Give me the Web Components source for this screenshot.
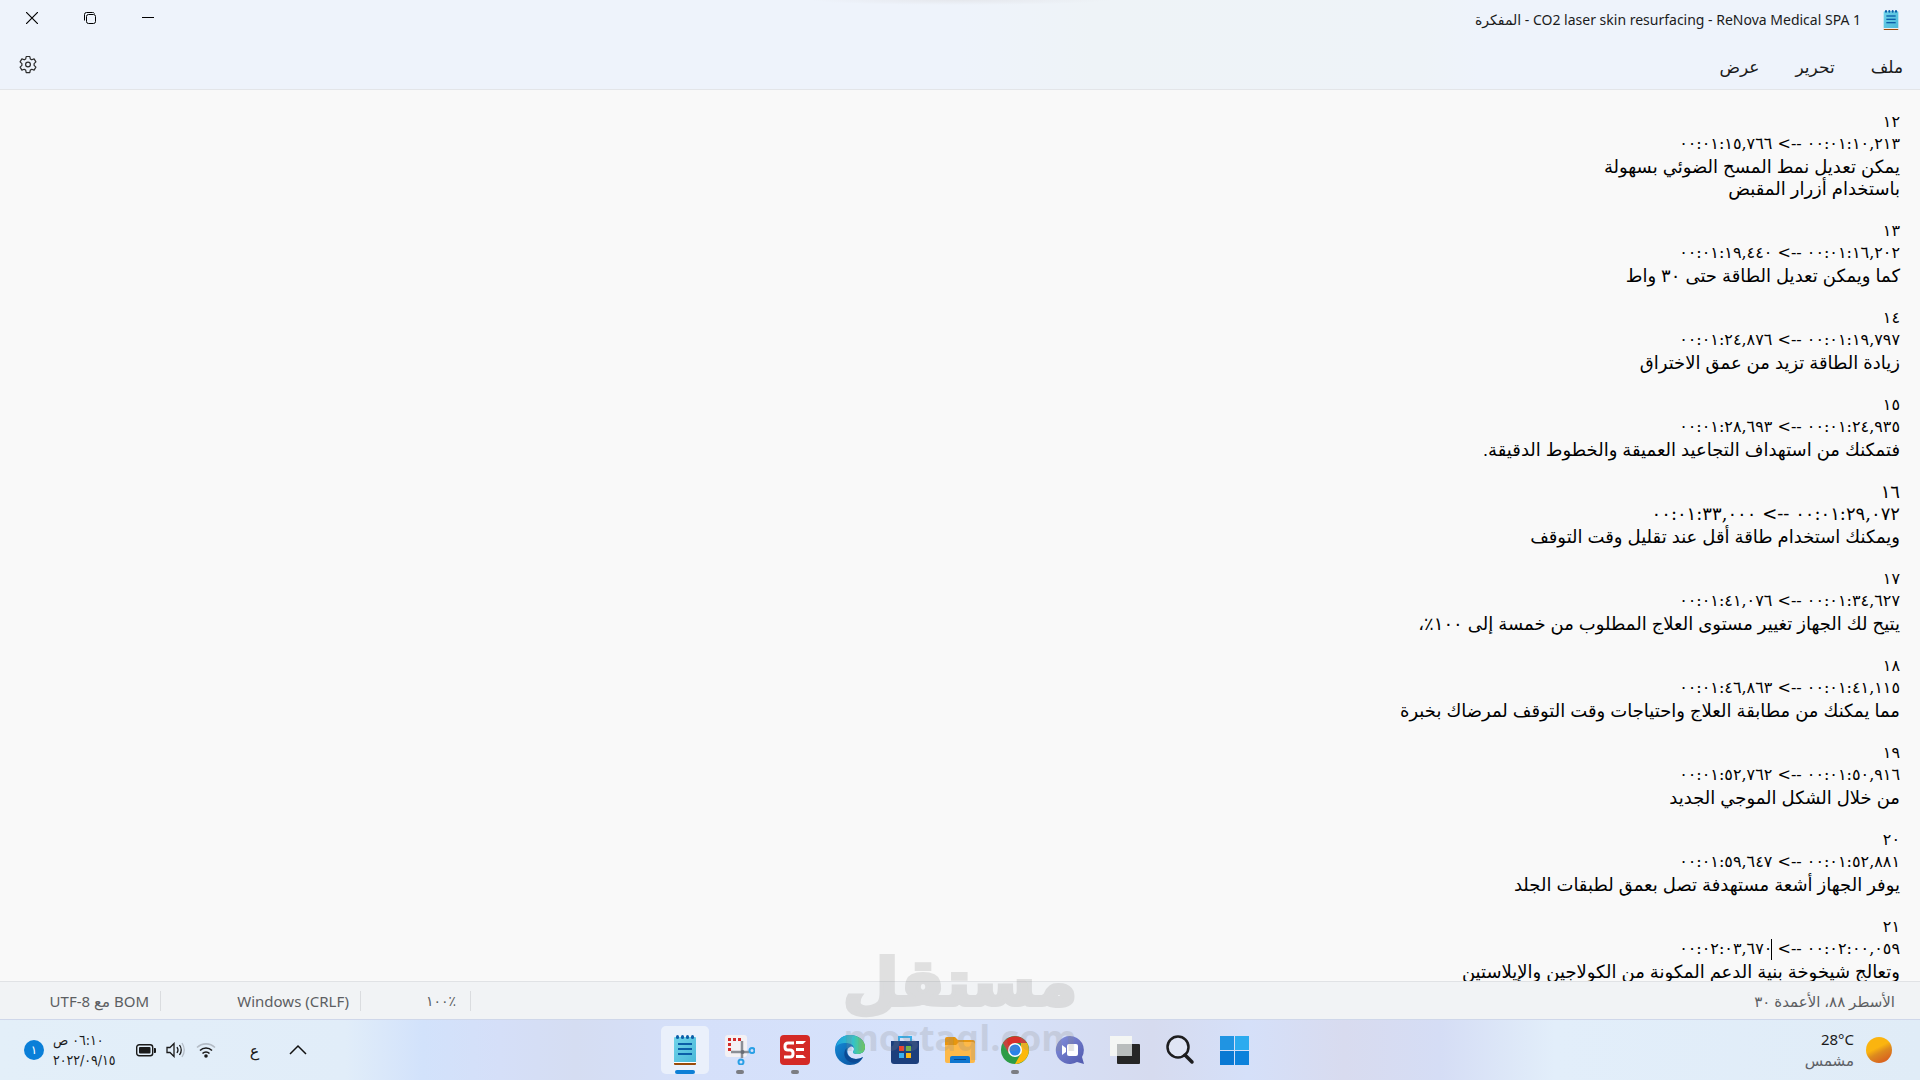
<!DOCTYPE html>
<html lang="ar" dir="rtl">
<head>
<meta charset="utf-8">
<title>CO2 laser skin resurfacing - ReNova Medical SPA 1 - المفكرة</title>
<style>
html,body{height:100%;margin:0}
body{overflow:hidden;font-family:"Noto Sans","DejaVu Sans",sans-serif;color:#1b1b1b;background:#f9f9f9}
</style>
</head>
<body>
<desk-top></desk-top>
<script>
const define = (name, html, setup) => {
  const tpl = document.createElement('template');
  tpl.innerHTML = html;
  customElements.define(name, class extends HTMLElement {
    constructor() {
      super();
      this.attachShadow({mode: 'open'}).append(tpl.content.cloneNode(true));
    }
    connectedCallback() { if (setup) setup(this, this.shadowRoot); }
  });
};
const reset = 'button{font:inherit;color:inherit;background:none;border:0;padding:0;margin:0}svg{display:block}';

/* ---- icons ---- */
const icons = {
  notepad: `<svg viewBox="0 0 30 30" width="30" height="30"><defs><linearGradient id="n" x1="0" y1="0" x2="1" y2="1"><stop offset="0" stop-color="#6fd3ea"/><stop offset="1" stop-color="#4ab8d8"/></linearGradient></defs><path d="M4 28h22v1q0 1-1 1H5q-1 0-1-1z" fill="#9a4a08"/><path d="M4 26h22v2H4z" fill="#fff"/><path d="M4 3q0-1 1-1h20q1 0 1 1v24H4z" fill="url(#n)"/><g fill="#0b5ea8"><rect x="6" y="0" width="3" height="4" rx="1.500"/><rect x="11" y="0" width="3" height="4" rx="1.500"/><rect x="16" y="0" width="3" height="4" rx="1.500"/><rect x="21" y="0" width="3" height="4" rx="1.500"/><rect x="8" y="8" width="14" height="2"/><rect x="8" y="13" width="14" height="2"/><rect x="8" y="18" width="14" height="2"/></g></svg>`,
  snip: `<svg viewBox="0 0 30 30" width="30" height="30"><rect width="22" height="22" rx="3" fill="#f3f1f4"/><g fill="#d32a27"><rect x="3" y="3" width="3" height="3"/><rect x="8" y="3" width="3" height="3"/><rect x="13" y="3" width="3" height="3"/><rect x="3" y="8" width="3" height="3"/><rect x="3" y="13" width="3" height="3"/></g><path d="M17 6v17M6 17h18" stroke="#8b8f96" stroke-width="2.500"/><g fill="none" stroke="#2aa0e6" stroke-width="2"><circle cx="27" cy="15.500" r="2.500"/><circle cx="16" cy="27" r="2.500"/></g><circle cx="17.500" cy="17" r="2" fill="#666b73"/></svg>`,
  se: `<svg viewBox="0 0 30 30" width="30" height="30"><rect width="30" height="30" rx="4" fill="#d42a26"/><path d="M14 8H8q-3 0-3 3v1q0 3 3 3h2q3 0 3 3v1q0 3-3 3H4" fill="none" stroke="#fff" stroke-width="3"/><path d="M16 6h10l-3 3h-7zM16 13h8v3h-8zM16 20h7l3 3H16z" fill="#fff"/></svg>`,
  edge: `<svg viewBox="0 0 30 30" width="30" height="30"><defs><linearGradient id="e" x1="0" y1="0" x2="1" y2="0"><stop offset="0" stop-color="#1fa3e0"/><stop offset=".6" stop-color="#35c1c8"/><stop offset="1" stop-color="#6ad457"/></linearGradient><linearGradient id="f" x1="0" y1="0" x2="1" y2="1"><stop offset="0" stop-color="#1590dc"/><stop offset="1" stop-color="#0a4a97"/></linearGradient></defs><path d="M0 15C0 6 7 0 15 0c9 0 15 6 15 12 0 5-4 7-7 7-4 0-5-1-5-2 0-1 1-1 1-3 0-2-2-3-4-2-5 2-3 12 6 12 3 0 5-1 7-2-2 5-7 8-13 8C7 30 0 23 0 15z" fill="url(#f)"/><path d="M1 12C3 4 8 0 15 0c9 0 15 6 15 12 0 5-4 7-7 7-4 0-5-1-5-2 0-1 1-1 1-3 0-4-4-6-8-6-5 0-8 1-10 4z" fill="url(#e)"/><path d="M12 13c-4 3-4 11 3 14 5 2 10-1 13-5-2 1-4 2-7 2-7 0-11-6-9-11z" fill="#0b4a94"/></svg>`,
  store: `<svg viewBox="0 0 30 30" width="30" height="30"><path d="M9 6V2h12v4" fill="none" stroke="#35aeea" stroke-width="2"/><path d="M1 6h28v20q0 3-3 3H4q-3 0-3-3z" fill="#1c3f7c"/><path d="M9 11h5v5H9z" fill="#e8452c"/><path d="M16 11h5v5h-5z" fill="#6fb93a"/><path d="M9 18h5v5H9z" fill="#3ab0ee"/><path d="M16 18h5v5h-5z" fill="#fdb813"/></svg>`,
  folder: `<svg viewBox="0 0 30 30" width="30" height="30"><path d="M0 4q0-2 2-2h8l3 3h15q2 0 2 2v8H0z" fill="#e8960f"/><path d="M0 10h11l3-3h14q2 0 2 2v17q0 2-2 2H2q-2 0-2-2z" fill="#fdb94a"/><path d="M5 28v-5q0-2 2-2h16q2 0 2 2v5z" fill="#0f76cf"/><path d="M9 24h12v1H9z" fill="#08488c"/></svg>`,
  chrome: `<svg viewBox="0 0 28 28" width="28" height="28"><circle cx="14" cy="14" r="14" fill="#2c9c46"/><path d="M26 7a14 14 0 0 1-12 21l6-10.500V7z" fill="#fdb90b"/><path d="M2 7a14 14 0 0 1 24 0H14l-6 10.500z" fill="#d8302a"/><circle cx="14" cy="14" r="7" fill="#fff"/><circle cx="14" cy="14" r="5.500" fill="#2a83e8"/></svg>`,
  teams: `<svg viewBox="0 0 30 30" width="30" height="30"><defs><linearGradient id="t" x1="0" y1="0" x2="1" y2="1"><stop offset="0" stop-color="#8490dc"/><stop offset="1" stop-color="#5059ae"/></linearGradient></defs><path d="M15 1a14 14 0 0 1 12 21l2 7-7-2A14 14 0 1 1 15 1z" fill="url(#t)"/><rect x="12" y="9" width="11" height="12" rx="2" fill="#fff"/><path d="M7 10l4 3v4l-4 3z" fill="#fff"/></svg>`,
  taskview: `<svg viewBox="0 0 30 30" width="30" height="30"><rect x="7" y="9" width="23" height="20" rx="1" fill="#262626"/><path d="M0 1h22v20H0z" fill="#f4f6f4"/><path d="M7 9h15v12H7z" fill="#b9bdbd"/></svg>`,
  search: `<svg viewBox="0 0 30 30" width="30" height="30"><circle cx="13" cy="12" r="10.500" fill="#ffffff40" stroke="#1d1d1f" stroke-width="2.500"/><path d="M20 20l7 7" stroke="#1d1d1f" stroke-width="3.500" stroke-linecap="round"/></svg>`,
  start: `<svg viewBox="0 0 30 30" width="30" height="30"><path d="M0 1h14v14H0z" fill="#2094e2"/><path d="M15 1h14v14H15z" fill="#2cabef"/><path d="M0 16h14v14H0z" fill="#0a79d3"/><path d="M15 16h14v14H15z" fill="#0d82db"/></svg>`,
  gear: `<svg viewBox="0 0 20 20" width="20" height="20" fill="none" stroke="#2b2b2b" stroke-width="1.200" stroke-linejoin="round"><path d="M8.200 1.500h3.600l.5 2.400 1.500.9 2.300-.9 1.800 3-1.800 1.700v1.800l1.800 1.700-1.800 3-2.300-.8-1.500.8-.5 2.500H8.200l-.5-2.500-1.500-.8-2.300.8-1.800-3 1.800-1.700V8.600L2.100 6.900l1.800-3 2.300.9 1.500-.9z"/><circle cx="10" cy="9.500" r="2.400"/></svg>`
};
define('app-icon', `<style>:host{display:block}svg{display:block;width:var(--w,auto);height:auto}</style><span></span>`,
  (el, root) => { root.querySelector('span').innerHTML = icons[el.getAttribute('name')] || ''; });

/* ---- window chrome ---- */
define('title-bar', `<style>${reset}
:host{display:flex;align-items:center;justify-content:space-between;height:40px;padding:0 19px 0 3px}
.name{display:flex;align-items:center;gap:20px;font-size:14px;line-height:20px}
app-icon{--w:20px}
.btns{display:flex;height:36px;align-self:flex-start}
button{width:58px;display:grid;place-items:center}
</style>
<div class="name"><app-icon name="notepad"></app-icon><span><slot></slot></span></div>
<div class="btns">
<button aria-label="تصغير"><svg width="12" height="12"><path d="M0 5.500h12" stroke="#000"/></svg></button>
<button aria-label="استعادة"><svg width="14" height="14" fill="none" stroke="#000"><rect x="3.500" y="3.500" width="9" height="9" rx="2"/><path d="M1.500 9.500v-6q0-2 2-2h6q1.500 0 2 1"/></svg></button>
<button aria-label="إغلاق"><svg width="12" height="12"><path d="M0 0l12 12M12 0L0 12" stroke="#000" stroke-width="1.200"/></svg></button>
</div>`);

define('menu-bar', `<style>${reset}
:host{display:flex;align-items:center;justify-content:space-between;height:49px;padding:0 17px 0 18px;border-bottom:1px solid #e3e5e8}
nav{display:flex;gap:36px;padding-top:4px}
nav button{font-size:17px;line-height:24px}
</style>
<nav><button>ملف</button><button>تحرير</button><button>عرض</button></nav>
<button aria-label="الإعدادات"><app-icon name="gear"></app-icon></button>`);

define('sub-cue', `<style>
:host{display:block;padding-bottom:20px;color:#000;font-family:"Liberation Sans","DejaVu Sans",sans-serif;font-size:18px;line-height:22px}
.n,.t{height:22px;white-space:nowrap;font-family:"DejaVu Serif","DejaVu Sans",serif;font-size:16px}
.t{height:23px}
:host([large]) .n,:host([large]) .t{font-size:18px}
.caret{display:inline-block;width:1px;height:21px;margin-left:-1px;background:#000;vertical-align:middle}
</style><div class="n"></div><div class="t"></div><slot></slot>`,
(el, root) => {
  root.querySelector('.n').textContent = el.getAttribute('n');
  const t = root.querySelector('.t'), to = el.getAttribute('to');
  t.append(el.getAttribute('from') + ' --> ');
  if (el.hasAttribute('caret')) {
    const c = document.createElement('span'); c.className = 'caret'; t.append(c);
  }
  t.append(to);
});

define('text-editor', `<style>
:host{display:block;min-height:0;overflow:hidden;background:#f9f9f9}
.area{padding:21px 20px 0;outline:0}
</style><div class="area" role="textbox" aria-multiline="true" aria-label="محرر النص" contenteditable="true" spellcheck="false"><slot></slot></div>`);

define('status-bar', `<style>
:host{display:flex;align-items:center;height:37px;border-top:1px solid #e0e2e5;border-bottom:1px solid #cfd7ea;background:#f1f3f5;color:#5c5e62;font-size:15px;line-height:20px}
.pos{flex:1;padding-right:25px}
.cell{box-sizing:border-box;border-right:1px solid #dadcdf;padding-right:11px;white-space:nowrap}
.zoom{width:110px;padding-right:14px;font-size:14px}.eol{width:200px}.enc{width:161px}
</style>
<div class="pos">الأسطر ٨٨، الأعمدة ٣٠</div><div class="cell zoom">٪١٠٠</div><div class="cell eol"><bdi>Windows (CRLF)</bdi></div><div class="cell enc">BOM مع UTF-8</div>`);

/* ---- taskbar ---- */
define('task-app', `<style>${reset}
:host{display:block}
button{position:relative;display:grid;place-items:center;width:48px;height:48px;border-radius:5px}
:host([active]) button{background:#eaf0fb}
button::after{content:"";position:absolute;bottom:0;left:50%;width:8px;height:4px;margin-left:-4px;border-radius:2px;background:transparent}
:host([running]) button::after{background:#7b7d82}
:host([active]) button::after{width:20px;margin-left:-10px;background:#0d7fd6}
</style><button></button>`,
(el, root) => {
  const n = el.getAttribute('name'), b = root.querySelector('button'), i = document.createElement('app-icon');
  i.setAttribute('name', n);
  b.setAttribute('aria-label', n);
  b.append(i);
});

define('system-tray', `<style>${reset}
:host{display:flex;align-items:center;justify-content:flex-end;padding-left:24px;font-size:14px;line-height:20px}
.lang{margin:0 30px 0 34px;font-size:16px}
.net{display:flex;gap:10px;align-items:center}
.clock{display:flex;align-items:center;gap:9px;margin-right:20px}
.time{direction:rtl;text-align:left;font-family:"DejaVu Sans Condensed","DejaVu Sans",sans-serif}
.badge{width:20px;height:20px;border-radius:50%;background:#0a7fd8;color:#fff;text-align:center;font-size:12px;line-height:20px}
</style>
<button aria-label="إظهار الرموز المخفية"><svg width="18" height="12" fill="none" stroke="#111" stroke-width="1.500"><path d="M1 10l8-8 8 8"/></svg></button>
<button class="lang">ع</button>
<button class="net" aria-label="الشبكة والصوت والبطارية">
<svg width="20" height="16" fill="none" stroke="#1a1a1a" stroke-width="1.600"><path d="M1 5.500a13 13 0 0 1 18 0" stroke="#b4bcc6"/><path d="M4 8.500a8.500 8.500 0 0 1 12 0M6.500 11.500a5 5 0 0 1 7 0"/><circle cx="10" cy="14" r="1" fill="#1a1a1a"/></svg>
<svg width="20" height="16" fill="none" stroke="#1a1a1a" stroke-width="1.300"><path d="M1 5.500h3l4-4v13l-4-4H1z"/><path d="M11 5q2 3 0 6M13.500 3q3.500 5 0 10"/><path d="M16 1q4.500 7 0 14" stroke="#b4bcc6"/></svg>
<svg width="20" height="13"><rect x=".7" y=".7" width="16" height="11" rx="2.500" fill="none" stroke="#1a1a1a" stroke-width="1.400"/><rect x="3" y="3" width="11.500" height="6.500" rx="1" fill="#1a1a1a"/><path d="M18 4h1q1 0 1 1v3q0 1-1 1h-1z" fill="#1a1a1a"/></svg>
</button>
<button class="clock"><span class="time">٠٦:١٠ ص<br>٢٠٢٢/٠٩/١٥</span><span class="badge">١</span></button>`);

define('weather-widget', `<style>${reset}
button{display:flex;align-items:center;gap:12px;padding-right:28px;text-align:right;font-size:15px;line-height:21px}
.c{display:block;color:#5c6066}
</style><button><svg width="26" height="26"><defs><linearGradient id="w" x1="0" y1="0" x2=".5" y2="1"><stop offset=".5" stop-color="#fbb40f"/><stop offset=".7" stop-color="#dd8a1e"/><stop offset="1" stop-color="#d9661f"/></linearGradient></defs><circle cx="13" cy="13" r="13" fill="url(#w)"/></svg><span><bdi>28°C</bdi><span class="c">مشمس</span></span></button>`);

define('task-bar', `<style>
:host{display:grid;grid-template-columns:1fr auto 1fr;align-items:center;height:60px;background:linear-gradient(90deg,#e3eff9 0,#e1edf9 18%,#d2e2fb 22%,#d5dff8 26%,#d5ddf2 30%,#d5e0fa 36%,#d6e2fb 50%,#d6dbef 60%,#d5e0f9 65%,#d8dbef 70%,#d5ddf5 75%,#e2eefa 81%,#e0ecf7 100%)}
.apps{display:flex;gap:7px}
</style>
<weather-widget></weather-widget>
<div class="apps"><task-app name="start"></task-app><task-app name="search"></task-app><task-app name="taskview"></task-app><task-app name="teams"></task-app><task-app name="chrome" running></task-app><task-app name="folder"></task-app><task-app name="store"></task-app><task-app name="edge"></task-app><task-app name="se" running></task-app><task-app name="snip" running></task-app><task-app name="notepad" active></task-app></div>
<system-tray></system-tray>`);

define('water-mark', `<style>
:host{position:absolute;left:50%;bottom:20px;transform:translateX(-50%);display:flex;flex-direction:column;align-items:center;pointer-events:none;font-family:"DejaVu Sans",sans-serif;font-weight:700;color:#8a8a8a;opacity:.22}
.ar{font-size:64px;line-height:66px;-webkit-text-stroke:4px #8a8a8a}
.en{font-family:"Open Sans",sans-serif;font-size:36px;line-height:44px}
</style><span class="ar">مستقل</span><span class="en">mostaql.com</span>`);

define('desk-top', `<style>
:host{display:grid;grid-template-rows:auto 1fr auto auto;height:100vh;position:relative}
header{background:radial-gradient(ellipse 150px 5px at 50% 0,#e5e7ec,#e5e7ec00),linear-gradient(90deg,#eef3fb 50%,#eef3f7 57%,#eef3f8 74%,#eef3fb 77%)}
</style>
<header><title-bar>CO2 laser skin resurfacing - ReNova Medical SPA 1 - المفكرة</title-bar><menu-bar></menu-bar></header>
<text-editor>
<sub-cue n="١٢" from="٠٠:٠١:١٠,٢١٣" to="٠٠:٠١:١٥,٧٦٦"><div>يمكن تعديل نمط المسح الضوئي بسهولة</div><div>باستخدام أزرار المقبض</div></sub-cue>
<sub-cue n="١٣" from="٠٠:٠١:١٦,٢٠٢" to="٠٠:٠١:١٩,٤٤٠"><div>كما ويمكن تعديل الطاقة حتى ٣٠ واط</div></sub-cue>
<sub-cue n="١٤" from="٠٠:٠١:١٩,٧٩٧" to="٠٠:٠١:٢٤,٨٧٦"><div>زيادة الطاقة تزيد من عمق الاختراق</div></sub-cue>
<sub-cue n="١٥" from="٠٠:٠١:٢٤,٩٣٥" to="٠٠:٠١:٢٨,٦٩٣"><div>فتمكنك من استهداف التجاعيد العميقة والخطوط الدقيقة.</div></sub-cue>
<sub-cue large n="١٦" from="٠٠:٠١:٢٩,٠٧٢" to="٠٠:٠١:٣٣,٠٠٠"><div>ويمكنك استخدام طاقة أقل عند تقليل وقت التوقف</div></sub-cue>
<sub-cue n="١٧" from="٠٠:٠١:٣٤,٦٢٧" to="٠٠:٠١:٤١,٠٧٦"><div>يتيح لك الجهاز تغيير مستوى العلاج المطلوب من خمسة إلى ١٠٠٪،</div></sub-cue>
<sub-cue n="١٨" from="٠٠:٠١:٤١,١١٥" to="٠٠:٠١:٤٦,٨٦٣"><div>مما يمكنك من مطابقة العلاج واحتياجات وقت التوقف لمرضاك بخبرة</div></sub-cue>
<sub-cue n="١٩" from="٠٠:٠١:٥٠,٩١٦" to="٠٠:٠١:٥٢,٧٦٢"><div>من خلال الشكل الموجي الجديد</div></sub-cue>
<sub-cue n="٢٠" from="٠٠:٠١:٥٢,٨٨١" to="٠٠:٠١:٥٩,٦٤٧"><div>يوفر الجهاز أشعة مستهدفة تصل بعمق لطبقات الجلد</div></sub-cue>
<sub-cue n="٢١" from="٠٠:٠٢:٠٠,٠٥٩" to="٠٠:٠٢:٠٣,٦٧٠" caret><div>وتعالج شيخوخة بنية الدعم المكونة من الكولاجين والإيلاستين</div></sub-cue>
</text-editor>
<status-bar></status-bar>
<task-bar></task-bar>
<water-mark></water-mark>`);
</script>
</body>
</html>
